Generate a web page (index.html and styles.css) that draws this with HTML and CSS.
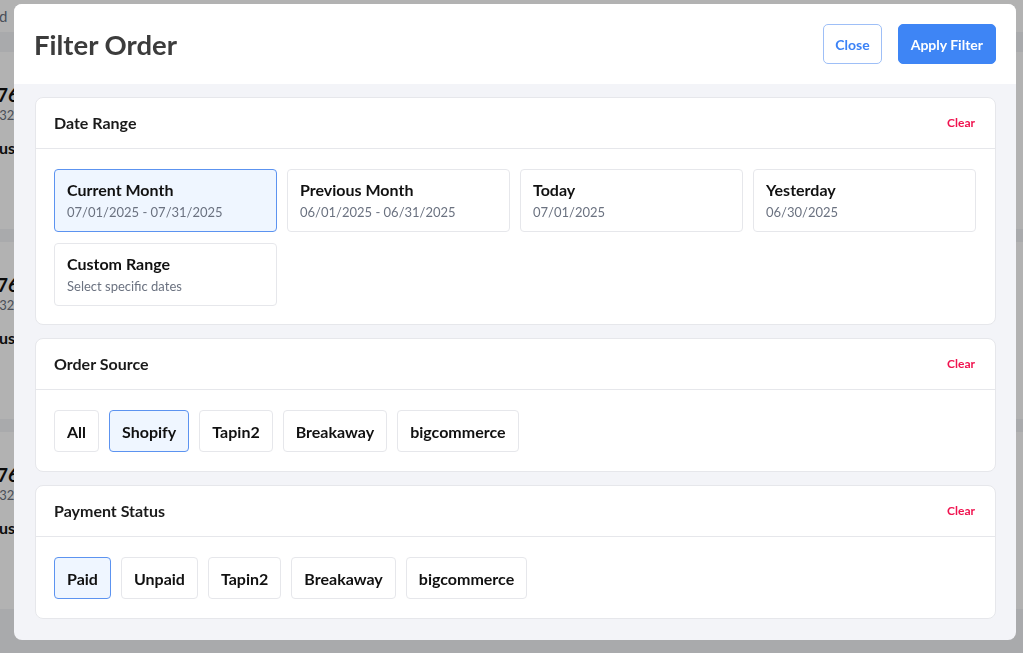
FILE: index.html
```html
<!DOCTYPE html>
<html>
<head>
<meta charset="utf-8">
<link rel="stylesheet" href="styles.css">
</head>
<body>
<div class="page">
  <div class="page-top"><span class="page-top-text">d</span></div>
  <div class="page-list">
    <div class="order-card">
      <div class="order-num">76</div>
      <div class="order-time">:32</div>
      <div class="order-status">us</div>
    </div>
    <div class="order-card">
      <div class="order-num">76</div>
      <div class="order-time">:32</div>
      <div class="order-status">us</div>
    </div>
    <div class="order-card">
      <div class="order-num">76</div>
      <div class="order-time">:32</div>
      <div class="order-status">us</div>
    </div>
  </div>
</div>
<div class="overlay"></div>
<div class="modal">
  <div class="modal-header">
    <h1 class="modal-title">Filter Order</h1>
    <div class="modal-actions">
      <button class="btn btn-outline">Close</button>
      <button class="btn btn-primary">Apply Filter</button>
    </div>
  </div>
  <div class="modal-body">
    <section class="card">
      <div class="card-header">
        <span class="card-title">Date Range</span>
        <span class="clear">Clear</span>
      </div>
      <div class="card-body date-grid">
        <div class="tile selected"><div class="tile-title">Current Month</div><div class="tile-sub">07/01/2025 - 07/31/2025</div></div>
        <div class="tile"><div class="tile-title">Previous Month</div><div class="tile-sub">06/01/2025 - 06/31/2025</div></div>
        <div class="tile"><div class="tile-title">Today</div><div class="tile-sub">07/01/2025</div></div>
        <div class="tile"><div class="tile-title">Yesterday</div><div class="tile-sub">06/30/2025</div></div>
        <div class="tile"><div class="tile-title">Custom Range</div><div class="tile-sub">Select specific dates</div></div>
      </div>
    </section>
    <section class="card">
      <div class="card-header">
        <span class="card-title">Order Source</span>
        <span class="clear">Clear</span>
      </div>
      <div class="card-body chips">
        <span class="chip">All</span>
        <span class="chip selected">Shopify</span>
        <span class="chip">Tapin2</span>
        <span class="chip">Breakaway</span>
        <span class="chip">bigcommerce</span>
      </div>
    </section>
    <section class="card">
      <div class="card-header">
        <span class="card-title">Payment Status</span>
        <span class="clear">Clear</span>
      </div>
      <div class="card-body chips">
        <span class="chip selected">Paid</span>
        <span class="chip">Unpaid</span>
        <span class="chip">Tapin2</span>
        <span class="chip">Breakaway</span>
        <span class="chip">bigcommerce</span>
      </div>
    </section>
  </div>
</div>
</body>
</html>
```

FILE: styles.css
```css
* { box-sizing: border-box; }
html, body {
  margin: 0;
  padding: 0;
  width: 1023px;
  height: 653px;
  overflow: hidden;
  font-family: Lato, "Noto Sans", sans-serif;
  background: #f3f4f6;
}
.page {
  width: 1023px;
  height: 653px;
  background: #f3f4f6;
}
.page-top {
  height: 32px;
  background: #ffffff;
  display: flex;
  align-items: center;
}
.page-top-text {
  margin-left: -1px;
  font-size: 15px;
  color: #6b7280;
}
.page-list {
  padding-top: 20px;
  display: flex;
  flex-direction: column;
  gap: 13px;
}
.order-card {
  height: 177px;
  background: #ffffff;
  padding-top: 32px;
}
.order-num {
  margin-left: -3px;
  font-size: 19px;
  font-weight: 700;
  color: #111;
  line-height: 22px;
}
.order-time {
  margin-left: -4px;
  font-size: 13px;
  color: #6b7280;
  line-height: 18px;
}
.order-status {
  margin-left: -1px;
  margin-top: 14px;
  font-size: 16px;
  font-weight: 700;
  color: #111;
}
.overlay {
  position: fixed;
  inset: 0;
  background: rgba(0, 0, 0, 0.3);
}
.modal {
  position: fixed;
  left: 14px;
  top: 4px;
  width: 1002px;
  height: 636px;
  border-radius: 8px;
  background: #f3f4f8;
  overflow: hidden;
  display: flex;
  flex-direction: column;
}
.modal-header {
  height: 80px;
  flex: none;
  background: #ffffff;
  display: flex;
  align-items: center;
  justify-content: space-between;
  padding: 0 20px 0 20px;
}
.modal-title {
  margin: 0;
  font-size: 27.5px;
  font-weight: 700;
  color: #3c3c3c;
}
.modal-actions {
  display: flex;
  gap: 16px;
}
.btn {
  height: 40px;
  padding: 0 12px;
  border-radius: 5px;
  font-family: Lato, "Noto Sans", sans-serif;
  font-size: 14px;
  font-weight: 700;
  cursor: pointer;
}
.btn-outline {
  padding: 0 11px;
  background: #ffffff;
  border: 1px solid #9ebff7;
  color: #3b82f6;
}
.btn-primary {
  background: #3e85f5;
  border: 1px solid #3e85f5;
  color: #ffffff;
}
.modal-body {
  padding: 13px 20px 21px 21px;
  display: flex;
  flex-direction: column;
  gap: 13px;
}
.card {
  background: #ffffff;
  border: 1px solid #e6e7eb;
  border-radius: 8px;
}
.card-header {
  height: 51px;
  border-bottom: 1px solid #e6e7eb;
  display: flex;
  align-items: center;
  justify-content: space-between;
  padding: 0 20px 1px 18px;
}
.card-title {
  font-size: 16px;
  font-weight: 700;
  color: #1a1a1a;
}
.clear {
  font-size: 12px;
  font-weight: 700;
  color: #f0134f;
}
.card-body {
  padding: 20px 19px 19px 18px;
}
.date-grid {
  padding-bottom: 18px;
  display: grid;
  grid-template-columns: repeat(4, 1fr);
  column-gap: 10px;
  row-gap: 11px;
}
.tile {
  height: 63px;
  border: 1px solid #e6e7eb;
  border-radius: 4px;
  padding: 10px 12px 9px;
}
.tile.selected, .chip.selected {
  background: #eff6ff;
  border-color: #5c93f0;
}
.tile-title {
  font-size: 16px;
  font-weight: 700;
  color: #111;
  line-height: 20px;
}
.tile-sub {
  margin-top: 3px;
  font-size: 13px;
  color: #6b7280;
  line-height: 18px;
}
.chips {
  display: flex;
  gap: 10px;
}
.chip {
  height: 42px;
  padding: 0 12px;
  display: flex;
  align-items: center;
  border: 1px solid #e6e7eb;
  border-radius: 4px;
  font-size: 16px;
  font-weight: 700;
  color: #111;
}
```
